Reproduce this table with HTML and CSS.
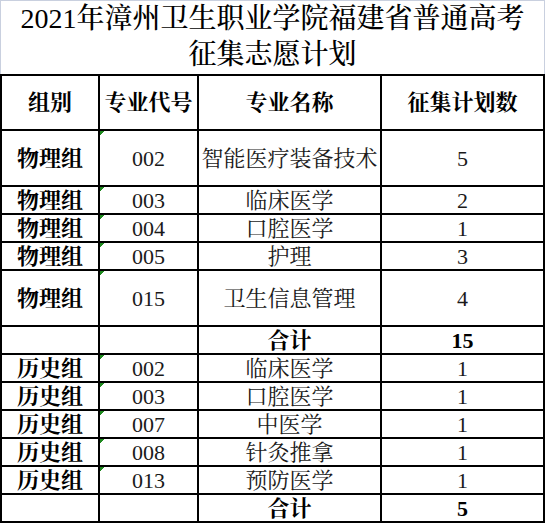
FILE: index.html
```html
<!DOCTYPE html>
<html lang="zh-CN">
<head>
<meta charset="utf-8">
<title>2021年漳州卫生职业学院福建省普通高考征集志愿计划</title>
<link rel="stylesheet" href="styles.css">
</head>
<body>
<div class="sheet">
  <div class="title">
    <div class="title-line">2021年漳州卫生职业学院福建省普通高考</div>
    <div class="title-line">征集志愿计划</div>
  </div>
  <div class="grid">
    <div class="cell head">组别</div>
    <div class="cell head">专业代号</div>
    <div class="cell head">专业名称</div>
    <div class="cell head">征集计划数</div>

    <div class="cell bold tall">物理组</div>
    <div class="cell code tall">002</div>
    <div class="cell tall">智能医疗装备技术</div>
    <div class="cell num tall">5</div>

    <div class="cell bold">物理组</div>
    <div class="cell code">003</div>
    <div class="cell">临床医学</div>
    <div class="cell num">2</div>

    <div class="cell bold">物理组</div>
    <div class="cell code">004</div>
    <div class="cell">口腔医学</div>
    <div class="cell num">1</div>

    <div class="cell bold">物理组</div>
    <div class="cell code">005</div>
    <div class="cell">护理</div>
    <div class="cell num">3</div>

    <div class="cell bold tall">物理组</div>
    <div class="cell code tall">015</div>
    <div class="cell tall">卫生信息管理</div>
    <div class="cell num tall">4</div>

    <div class="cell"></div>
    <div class="cell"></div>
    <div class="cell bold">合计</div>
    <div class="cell num bold">15</div>

    <div class="cell bold">历史组</div>
    <div class="cell code">002</div>
    <div class="cell">临床医学</div>
    <div class="cell num">1</div>

    <div class="cell bold">历史组</div>
    <div class="cell code">003</div>
    <div class="cell">口腔医学</div>
    <div class="cell num">1</div>

    <div class="cell bold">历史组</div>
    <div class="cell code">007</div>
    <div class="cell">中医学</div>
    <div class="cell num">1</div>

    <div class="cell bold">历史组</div>
    <div class="cell code">008</div>
    <div class="cell">针灸推拿</div>
    <div class="cell num">1</div>

    <div class="cell bold">历史组</div>
    <div class="cell code">013</div>
    <div class="cell">预防医学</div>
    <div class="cell num">1</div>

    <div class="cell"></div>
    <div class="cell"></div>
    <div class="cell bold">合计</div>
    <div class="cell num bold">5</div>
  </div>
</div>
</body>
</html>
```

FILE: styles.css
```css
html, body {
  margin: 0;
  padding: 0;
  background: #ffffff;
}

.sheet {
  width: 545px;
  font-family: "Liberation Serif", "Noto Serif CJK SC", "Noto Sans CJK SC", serif;
  color: #000;
}

.title {
  box-sizing: border-box;
  height: 74px;
  border-top: 1px solid #c9d0df;
  border-left: 1px solid #c9d0df;
  border-right: 1px solid #c9d0df;
  display: flex;
  flex-direction: column;
  align-items: center;
}

.title-line {
  font-size: 28px;
  line-height: 36px;
  font-weight: 500;
  white-space: nowrap;
}

.grid {
  display: grid;
  grid-template-columns: 98px 99px 183px 163px;
  grid-template-rows: 55px 56px 28px 28px 28px 56px 28px 28px 28px 28px 28px 28px 28px;
  border-top: 2px solid #000;
  border-left: 2px solid #000;
}

.cell {
  box-sizing: border-box;
  border-right: 2px solid #000;
  border-bottom: 2px solid #000;
  display: flex;
  align-items: center;
  justify-content: center;
  padding-top: 2px;
  font-size: 22px;
  line-height: 26px;
  white-space: nowrap;
  color: #1a1a1a;
}

.head {
  font-weight: 700;
  font-size: 22px;
  padding-top: 0;
  color: #000;
}

.bold {
  font-weight: 700;
  color: #000;
}

.code {
  background: linear-gradient(135deg, #1f8a1f 0, #1f8a1f 3px, transparent 3px);
}

.num {
  font-family: "Liberation Serif", serif;
}
```
